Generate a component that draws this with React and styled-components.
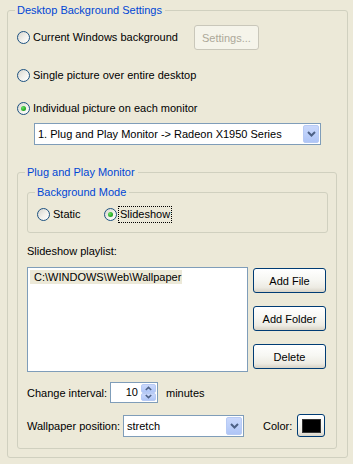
import React from "react";
import styled, { createGlobalStyle } from "styled-components";

const GlobalStyle = createGlobalStyle`
  html, body { margin: 0; padding: 0; background: #ECE9D8; }
  body { font-family: "Liberation Sans", Arial, sans-serif; font-size: 11px; color: #000; }
  * { box-sizing: border-box; }
`;

const Page = styled.div`
  width: 353px;
  height: 464px;
  padding: 4px 0 0 7px;
  background: #ECE9D8;
  overflow: hidden;
`;

const Group = styled.fieldset`
  margin: ${(p) => p.$mt || 0}px 0 0 0;
  padding: ${(p) => p.$pt}px ${(p) => p.$pr}px ${(p) => p.$pb}px 9px;
  border: 1px solid #D0D0BF;
  border-radius: 3px;
  width: ${(p) => p.$w}px;
  min-width: 0;
`;

const Legend = styled.legend`
  padding: 0 3px 0 2px;
  margin-left: -2px;
  line-height: 13px;
  font-size: 11px;
  color: #0046D5;
`;

const Row = styled.div`
  display: flex;
  align-items: center;
  height: ${(p) => p.$h}px;
  margin-top: ${(p) => p.$mt || 0}px;
  margin-left: ${(p) => p.$ml || 0}px;
  gap: ${(p) => p.$gap || 0}px;
`;

const RadioLabel = styled.label`
  display: flex;
  align-items: center;
  gap: 3px;
  height: 13px;
  line-height: 13px;
  white-space: nowrap;
  width: ${(p) => (p.$w ? `${p.$w}px` : "auto")};
  flex: none;
`;

const Circle = styled.span`
  width: 13px;
  height: 13px;
  border-radius: 50%;
  border: 1px solid #1C5180;
  background: linear-gradient(135deg, #D6D5CE 0%, #F2F1EC 55%, #FFFFFF 100%);
  display: flex;
  align-items: center;
  justify-content: center;
  flex: none;
`;

const Dot = styled.span`
  width: 5px;
  height: 5px;
  border-radius: 50%;
  background: radial-gradient(circle at 35% 35%, #6BE067 0%, #29B029 55%, #1A861A 100%);
`;

const FocusText = styled.span`
  border: 1px dotted #000;
  padding: 1px 1px 1px 1px;
  margin-left: -2px;
  line-height: 13px;
`;

const Radio = ({ checked, focus, width, children }) => (
  <RadioLabel $w={width}>
    <Circle>{checked && <Dot />}</Circle>
    {focus ? <FocusText>{children}</FocusText> : <span>{children}</span>}
  </RadioLabel>
);

const Button = styled.div`
  width: ${(p) => p.$w}px;
  height: ${(p) => p.$h}px;
  border: 1px solid ${(p) => (p.$disabled ? "#C9C7BA" : "#003C74")};
  border-radius: 3px;
  background: ${(p) =>
    p.$disabled
      ? "#F5F4EA"
      : "linear-gradient(180deg, #FFFFFF 0%, #F7F7F3 45%, #EDEBE3 80%, #D8D3C6 100%)"};
  color: ${(p) => (p.$disabled ? "#ACA899" : "#000")};
  display: flex;
  align-items: center;
  justify-content: center;
  flex: none;
  margin-left: ${(p) => p.$ml || 0}px;
`;

const Combo = styled.div`
  width: ${(p) => p.$w}px;
  height: 22px;
  border: 1px solid #7F9DB9;
  background: #fff;
  display: flex;
  align-items: center;
  padding: 1px;
  flex: none;
  margin-left: ${(p) => p.$ml || 0}px;
`;

const ComboText = styled.span`
  flex: 1;
  padding-left: 2px;
  line-height: 14px;
  white-space: nowrap;
  overflow: hidden;
`;

const ArrowBtn = styled.div`
  width: 16px;
  height: 18px;
  border: 1px solid #B7CAF4;
  border-radius: 2px;
  background: linear-gradient(180deg, #CAD8FB 0%, #BDD0FA 50%, #AFC5F6 100%);
  display: flex;
  align-items: center;
  justify-content: center;
  flex: none;
`;

const Chevron = ({ up, w = 9, h = 6 }) => (
  <svg width={w} height={h} viewBox="0 0 9 6">
    <path
      d={up ? "M1 5 L4.5 1.5 L8 5" : "M1 1 L4.5 4.5 L8 1"}
      fill="none"
      stroke="#4D6185"
      strokeWidth="2"
    />
  </svg>
);

const Label = styled.div`
  line-height: 14px;
  white-space: nowrap;
  margin-top: ${(p) => p.$mt || 0}px;
  margin-left: ${(p) => p.$ml || 0}px;
  width: ${(p) => (p.$w ? `${p.$w}px` : "auto")};
  flex: none;
`;

const ListArea = styled.div`
  display: flex;
  gap: 5px;
  margin-top: 9px;
`;

const ListBox = styled.div`
  width: 221px;
  height: 105px;
  border: 1px solid #7F9DB9;
  background: #fff;
  padding: 2px;
`;

const ListItem = styled.div`
  width: 152px;
  height: 14px;
  line-height: 14px;
  padding-left: 4px;
  background: #ECE9D8;
  white-space: nowrap;
`;

const ButtonCol = styled.div`
  display: flex;
  flex-direction: column;
  gap: 13px;
  margin-top: 1px;
`;

const SpinBox = styled.div`
  width: 48px;
  height: 21px;
  border: 1px solid #7F9DB9;
  background: #fff;
  display: flex;
  padding: 1px;
  flex: none;
`;

const SpinValue = styled.span`
  flex: 1;
  text-align: right;
  padding-right: 3px;
  line-height: 17px;
`;

const SpinBtns = styled.div`
  width: 15px;
  display: flex;
  flex-direction: column;
`;

const SpinHalf = styled.div`
  flex: 1;
  border: 1px solid #B7CAF4;
  border-radius: 2px;
  background: linear-gradient(180deg, #CAD8FB 0%, #BDD0FA 50%, #AFC5F6 100%);
  display: flex;
  align-items: center;
  justify-content: center;
`;

const Swatch = styled.div`
  width: 19px;
  height: 14px;
  background: #000;
  border: 1px solid #333;
`;

export default function App() {
  return (
    <>
      <GlobalStyle />
      <Page>
        <Group $w={341} $pt={8} $pr={9} $pb={8}>
          <Legend>Desktop Background Settings</Legend>
          <Row $h={25} $gap={16}>
            <Radio>Current Windows background</Radio>
            <Button $w={65} $h={25} $disabled>
              Settings...
            </Button>
          </Row>
          <Row $h={13} $mt={19}>
            <Radio>Single picture over entire desktop</Radio>
          </Row>
          <Row $h={13} $mt={20}>
            <Radio checked>Individual picture on each monitor</Radio>
          </Row>
          <Row $h={22} $mt={8} $ml={17}>
            <Combo $w={287}>
              <ComboText>1. Plug and Play Monitor -&gt; Radeon X1950 Series</ComboText>
              <ArrowBtn>
                <Chevron />
              </ArrowBtn>
            </Combo>
          </Row>

          <Group $mt={21} $w={320} $pt={7} $pr={8} $pb={11}>
            <Legend>Plug and Play Monitor</Legend>
            <Group $w={301} $pt={7} $pr={8} $pb={9}>
              <Legend>Background Mode</Legend>
              <Row $h={17}>
                <Radio width={67}>Static</Radio>
                <Radio checked focus>
                  Slideshow
                </Radio>
              </Row>
            </Group>

            <Label $mt={11}>Slideshow playlist:</Label>
            <ListArea>
              <ListBox>
                <ListItem>{"C:\\WINDOWS\\Web\\Wallpaper"}</ListItem>
              </ListBox>
              <ButtonCol>
                <Button $w={73} $h={25}>Add File</Button>
                <Button $w={73} $h={25}>Add Folder</Button>
                <Button $w={73} $h={25}>Delete</Button>
              </ButtonCol>
            </ListArea>

            <Row $h={21} $mt={10}>
              <Label $w={83}>Change interval:</Label>
              <SpinBox>
                <SpinValue>10</SpinValue>
                <SpinBtns>
                  <SpinHalf>
                    <Chevron up w={7} h={5} />
                  </SpinHalf>
                  <SpinHalf>
                    <Chevron w={7} h={5} />
                  </SpinHalf>
                </SpinBtns>
              </SpinBox>
              <Label $ml={8}>minutes</Label>
            </Row>

            <Row $h={23} $mt={11}>
              <Label $w={96}>Wallpaper position:</Label>
              <Combo $w={121}>
                <ComboText>stretch</ComboText>
                <ArrowBtn>
                  <Chevron />
                </ArrowBtn>
              </Combo>
              <Label $ml={19}>Color:</Label>
              <Button $w={28} $h={23} $ml={5}>
                <Swatch />
              </Button>
            </Row>
          </Group>
        </Group>
      </Page>
    </>
  );
}
